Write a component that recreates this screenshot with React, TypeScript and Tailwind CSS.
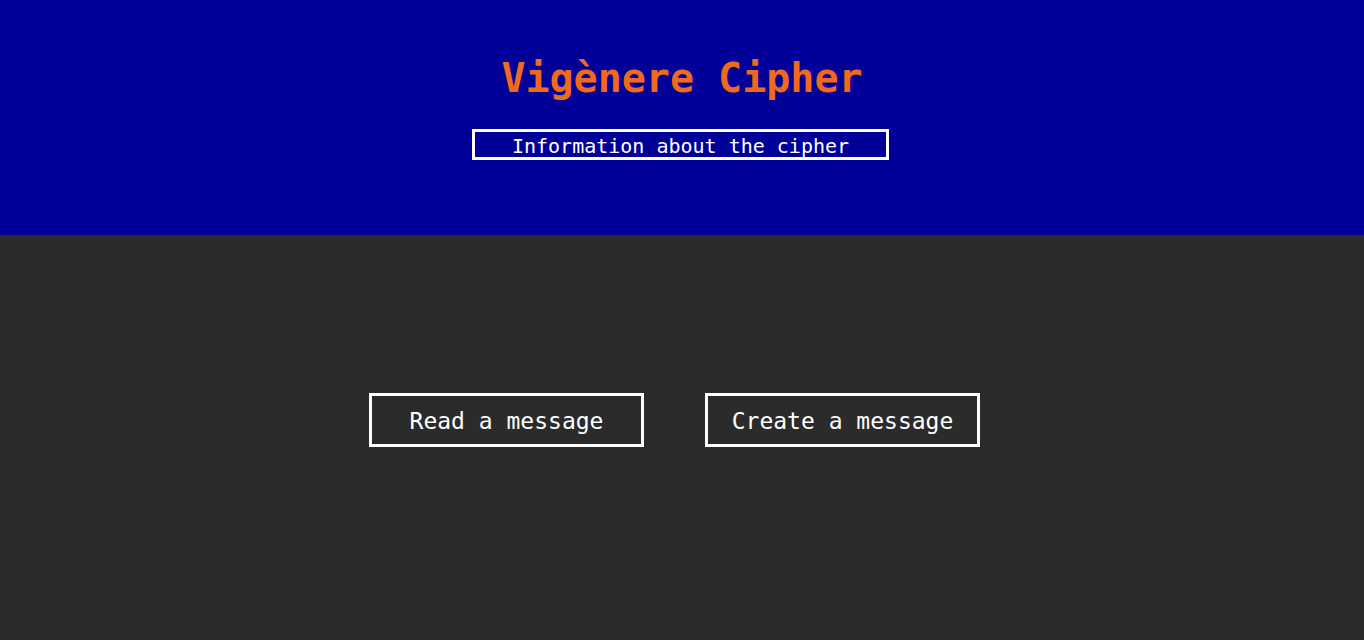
import React from 'react'

const App = () => {
  return (
    <div className="min-h-screen bg-[#2b2b2b] font-['DejaVu_Sans_Mono',monospace]">
      <header className="bg-[#000099] h-[235px] flex flex-col items-center pt-[52px]">
        <h1 className="text-[40px] leading-[52px] font-bold text-[#f0691c] font-['DejaVu_Sans_Mono',monospace]">
          Vigènere Cipher
        </h1>
        <button className="mt-[25px] mr-[3px] w-[417px] h-[31px] border-[3px] border-white text-white text-[20px] leading-[27px] pt-[1px] text-center">
          Information about the cipher
        </button>
      </header>
      <main className="flex justify-center gap-[61px] pt-[158px] pr-[15px]">
        <button className="w-[275px] h-[54px] border-[3px] border-white text-white text-[23px] leading-[48px] pt-[1px] text-center">
          Read a message
        </button>
        <button className="w-[275px] h-[54px] border-[3px] border-white text-white text-[23px] leading-[48px] pt-[1px] text-center">
          Create a message
        </button>
      </main>
    </div>
  )
}

export default App
